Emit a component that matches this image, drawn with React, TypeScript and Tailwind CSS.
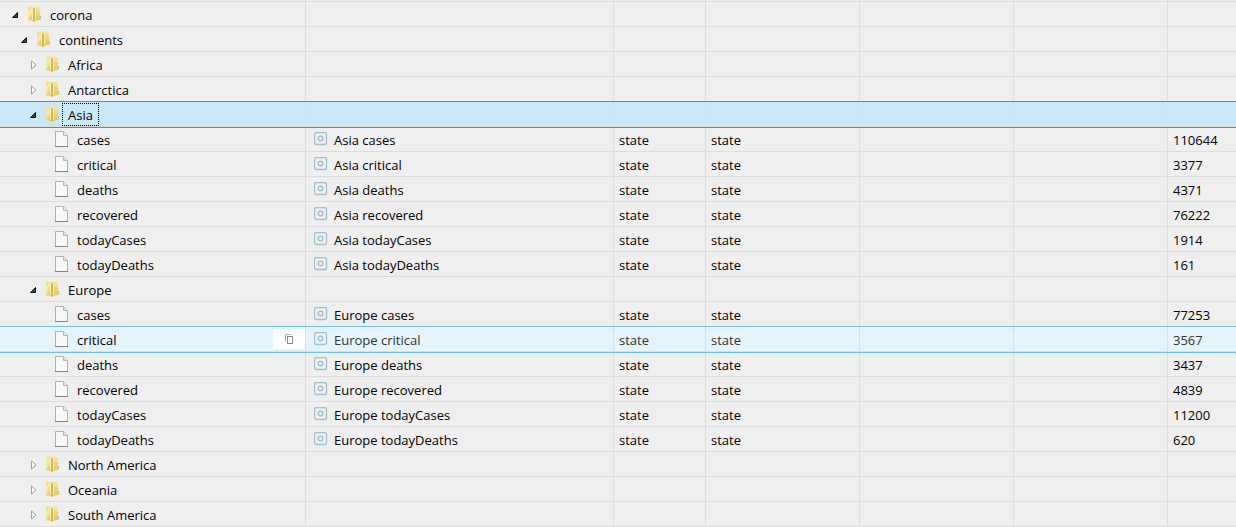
import React from "react";

type Row = {
  label: string;
  level: number;
  kind: "open" | "closed" | "file";
  name?: string;
  value?: string;
  selected?: boolean;
  hovered?: boolean;
};

const rows: Row[] = [
  { label: "corona", level: 0, kind: "open" },
  { label: "continents", level: 1, kind: "open" },
  { label: "Africa", level: 2, kind: "closed" },
  { label: "Antarctica", level: 2, kind: "closed" },
  { label: "Asia", level: 2, kind: "open", selected: true },
  { label: "cases", level: 3, kind: "file", name: "Asia cases", value: "110644" },
  { label: "critical", level: 3, kind: "file", name: "Asia critical", value: "3377" },
  { label: "deaths", level: 3, kind: "file", name: "Asia deaths", value: "4371" },
  { label: "recovered", level: 3, kind: "file", name: "Asia recovered", value: "76222" },
  { label: "todayCases", level: 3, kind: "file", name: "Asia todayCases", value: "1914" },
  { label: "todayDeaths", level: 3, kind: "file", name: "Asia todayDeaths", value: "161" },
  { label: "Europe", level: 2, kind: "open" },
  { label: "cases", level: 3, kind: "file", name: "Europe cases", value: "77253" },
  { label: "critical", level: 3, kind: "file", name: "Europe critical", value: "3567", hovered: true },
  { label: "deaths", level: 3, kind: "file", name: "Europe deaths", value: "3437" },
  { label: "recovered", level: 3, kind: "file", name: "Europe recovered", value: "4839" },
  { label: "todayCases", level: 3, kind: "file", name: "Europe todayCases", value: "11200" },
  { label: "todayDeaths", level: 3, kind: "file", name: "Europe todayDeaths", value: "620" },
  { label: "North America", level: 2, kind: "closed" },
  { label: "Oceania", level: 2, kind: "closed" },
  { label: "South America", level: 2, kind: "closed" },
];

const indents = ["pl-[8px]", "pl-[17px]", "pl-[26px]", "pl-[35px]"];

const cell = "border-b border-r border-[#dedede] p-0";

const FolderIcon = () => (
  <svg width="16" height="16" viewBox="0 0 16 16" className="shrink-0">
    <defs>
      <linearGradient id="folderFront" x1="0" y1="0" x2="0.6" y2="1">
        <stop offset="0" stopColor="#efd988" />
        <stop offset="0.45" stopColor="#f8eba9" />
        <stop offset="1" stopColor="#dfbd55" />
      </linearGradient>
      <linearGradient id="folderBack" x1="0" y1="0" x2="0" y2="1">
        <stop offset="0" stopColor="#f5e6a0" />
        <stop offset="1" stopColor="#e3c35c" />
      </linearGradient>
    </defs>
    {/* back flap with its tab */}
    <path d="M12 6.500h2q1 0 1 1V13q0 1-1 1h-2z" fill="#ecd47c" />
    <path d="M14 8h1v2h-1z" fill="#f7f3d6" />
    <path d="M14 10h1v3h-1z" fill="#8fcbd6" />
    <path d="M7 0.500h5.500q1 0 1 1V13q0 1-1 1L8 15z" fill="url(#folderBack)" />
    {/* front flap */}
    <path d="M2 1.500q0-1 1-1h4l2 1.500v13.500H7L6 14.500H3q-1 0-1-1z" fill="url(#folderFront)" />
    <path d="M7 2l2 .5V15l-1 1-1-1z" fill="#d9b84f" />
    <path d="M6 2h1v12H6z" fill="#f9efb6" />
    <path d="M9 2h1v11.500H9z" fill="#f8ecae" />
  </svg>
);

const FileIcon = () => (
  <svg width="16" height="16" viewBox="0 0 16 16" className="shrink-0">
    <path d="M2.500.5h8l4 4v11h-12z" fill="#f8f9f4" stroke="#b0b0b0" />
    <path d="M10.500.5v4h4" fill="#e6e6e6" stroke="#b4b4b4" />
    <path d="M2 15.500h13" stroke="#858585" />
  </svg>
);

const StateIcon = () => (
  <svg width="14" height="14" viewBox="0 0 14 14" className="shrink-0">
    <rect x="0.500" y="0.500" width="12" height="12" rx="2" fill="none" stroke="#a3bfca" strokeWidth="1.300" />
    <circle cx="6.500" cy="6.500" r="2.300" fill="none" stroke="#9dbbc8" strokeWidth="1.300" />
  </svg>
);

const CopyIcon = () => (
  <svg width="10" height="12" viewBox="0 0 10 12">
    <path d="M1.500 8.500v-7h5.500" fill="none" stroke="#aaa" />
    <rect x="3.500" y="3.500" width="5" height="7" fill="none" stroke="#8a8a8a" />
  </svg>
);

const Toggle = ({ row }: { row: Row }) => {
  if (row.kind === "file") return <span className="w-4 shrink-0" />;
  const open = row.kind === "open";
  return (
    <button
      type="button"
      aria-label={`${open ? "Collapse" : "Expand"} ${row.label}`}
      aria-expanded={open}
      className="flex h-4 w-4 shrink-0 items-center justify-center"
    >
      <svg width="16" height="16" viewBox="0 0 16 16">
        {open ? (
          <path d="M9.500 6.500v5h-5z" fill="#444" stroke="#111" strokeLinejoin="round" />
        ) : (
          <path d="M5.500 5v8l4.500-4z" fill="#fff" stroke="#a0a0a0" />
        )}
      </svg>
    </button>
  );
};

const TreeRow = ({ row }: { row: Row }) => {
  let rowStyle = "";
  if (row.selected) rowStyle = "bg-[#cbe8f6] outline outline-[#26a0da]";
  if (row.hovered) rowStyle = "bg-[#e5f3fb] outline outline-[#70c0e7]";
  const cellText = row.hovered ? "text-[#333]" : "text-black";
  const type = row.kind === "file" ? "state" : "";

  return (
    <tr className={`h-[25px] ${rowStyle}`}>
      <td className={cell}>
        <div className={`flex h-6 items-center gap-0.5 ${indents[row.level]}`}>
          <Toggle row={row} />
          {row.kind === "file" ? <FileIcon /> : <FolderIcon />}
          <span
            className={`border px-[5px] pt-px leading-5 ${
              row.selected ? "border-dotted border-black" : "border-transparent"
            }`}
          >
            {row.label}
          </span>
          {row.hovered && (
            <button
              type="button"
              aria-label="Copy id"
              className="ml-auto flex h-5 w-8 items-center justify-center bg-white"
            >
              <CopyIcon />
            </button>
          )}
        </div>
      </td>
      <td className={`${cell} ${cellText}`}>
        {row.name && (
          <div className="flex h-6 items-center gap-1.5 pl-2">
            <StateIcon />
            <span className="pt-0.5">{row.name}</span>
          </div>
        )}
      </td>
      <td className={`${cell} ${cellText}`}>
        <div className="px-[5px] pt-0.5">{type}</div>
      </td>
      <td className={`${cell} ${cellText}`}>
        <div className="px-[5px] pt-0.5">{type}</div>
      </td>
      <td className={cell} />
      <td className={cell} />
      <td className={`border-b border-[#dedede] p-0 ${cellText}`}>
        <div className="px-[5px] pt-0.5">{row.value}</div>
      </td>
    </tr>
  );
};

const App = () => {
  return (
    <main className="min-h-screen overflow-hidden bg-[#efefef] font-['Open_Sans','Noto_Sans',sans-serif] text-[13px] leading-5 text-black">
      <table className="w-full table-fixed border-separate border-spacing-0">
        <colgroup>
          <col className="w-[306px]" />
          <col className="w-[308px]" />
          <col className="w-[92px]" />
          <col className="w-[154px]" />
          <col className="w-[154px]" />
          <col className="w-[154px]" />
          <col />
        </colgroup>
        <tbody>
          {/* bottom edge of the row scrolled out above */}
          <tr className="h-0.5">
            <td className={cell} />
            <td className={cell} />
            <td className={cell} />
            <td className={cell} />
            <td className={cell} />
            <td className={cell} />
            <td className="border-b border-[#dedede] p-0" />
          </tr>
          {rows.map((row, i) => (
            <TreeRow key={i} row={row} />
          ))}
        </tbody>
      </table>
    </main>
  );
};

export default App;
